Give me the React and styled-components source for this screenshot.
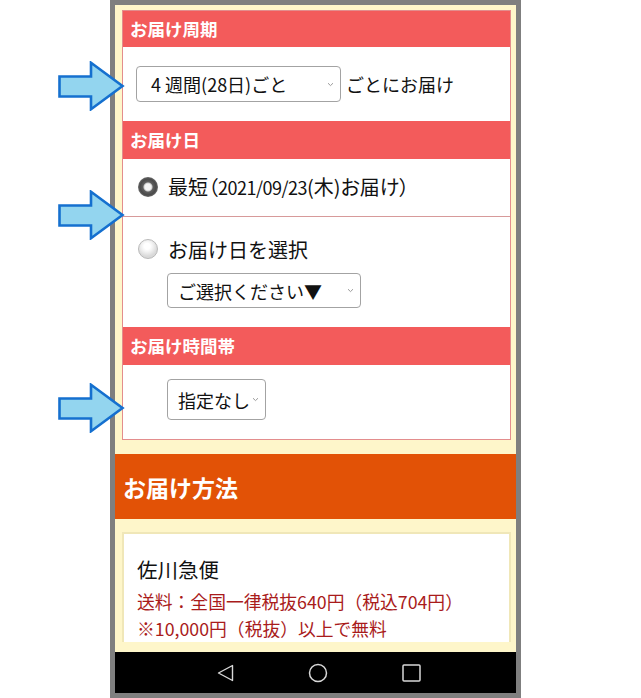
import React from 'react';
import styled, { createGlobalStyle } from 'styled-components';

const GlobalStyle = createGlobalStyle`
  html, body {
    margin: 0;
    padding: 0;
    background: #ffffff;
  }
  body {
    font-family: "Noto Sans CJK JP", "Noto Sans", sans-serif;
  }
`;

const Stage = styled.div`
  position: relative;
  width: 641px;
  height: 698px;
  overflow: hidden;
`;

const Phone = styled.div`
  margin-left: 110px;
  width: 411px;
  height: 698px;
  box-sizing: border-box;
  border: 5px solid #7f7f7f;
  display: flex;
  flex-direction: column;
  background: #000;
`;

const Screen = styled.div`
  flex: 1;
  overflow: hidden;
  background: #fef6ca;
  padding-top: 5px;
  display: flex;
  flex-direction: column;
`;

const Inset = styled.div`
  padding: 0 5px 0 7px;
`;

const FormBox = styled.div`
  border: 1px solid #e38d8d;
  background: #ffffff;
`;

const RedHeader = styled.div`
  background: #f35b5b;
  color: #ffffff;
  font-weight: 700;
  font-size: 17.5px;
  height: ${p => p.$h}px;
  line-height: ${p => p.$h}px;
  padding-left: 7px;
`;

const Body = styled.div`
  box-sizing: border-box;
  height: ${p => p.$h}px;
  padding: ${p => p.$pad};
  display: flex;
  flex-direction: column;
  justify-content: ${p => (p.$center ? 'center' : 'flex-start')};
  gap: ${p => p.$gap || 0}px;
  border-bottom: ${p => (p.$line ? '1px solid #d79a9a' : 'none')};
`;

const Row = styled.div`
  display: flex;
  align-items: center;
  gap: ${p => p.$gap || 0}px;
  padding-left: ${p => p.$indent || 0}px;
  height: ${p => (p.$h ? `${p.$h}px` : 'auto')};
`;

const SelectBox = styled.div`
  box-sizing: border-box;
  width: ${p => p.$w}px;
  height: ${p => p.$h}px;
  border: 1px solid #a3a3a3;
  border-radius: 4px;
  display: flex;
  align-items: center;
  justify-content: space-between;
  padding: 0 6px 0 10px;
  font-size: 18px;
  color: #111;
  background: #fff;
`;

const Label = styled.span`
  font-size: ${p => p.$size || 18}px;
  color: #111;
  white-space: nowrap;
  font-feature-settings: ${p => (p.$tight ? '"palt"' : 'normal')};
`;

const Digits = styled.span`
  font-size: 18px;
  letter-spacing: -0.5px;
`;

const Radio = styled.span`
  box-sizing: border-box;
  width: 20px;
  height: 20px;
  border-radius: 50%;
  flex: none;
  ${p =>
    p.$checked
      ? `background: radial-gradient(circle at 50% 50%, #f4f4f4 0 3px, #cfcfcf 4px, #5f5f5f 5px, #4a4a4a 8px, #6a6a6a 10px);`
      : `background: radial-gradient(circle at 45% 35%, #ffffff 0 3px, #f0f0f0 6px, #d9d9d9 10px);
         border: 1px solid #b9b9b9;`}
`;

const MethodHeader = styled.div`
  margin-top: 14px;
  background: #e25206;
  color: #fff;
  font-weight: 700;
  font-size: 23px;
  height: 65px;
  display: flex;
  align-items: center;
  padding-left: 8px;
`;

const Card = styled.div`
  margin-top: 13px;
  border: 2px solid #f0e7b8;
  border-bottom: none;
  background: #fff;
  padding: 20px 0 0 13px;
  display: flex;
  flex-direction: column;
`;

const Carrier = styled.div`
  font-size: 20.5px;
  color: #111;
  line-height: 30px;
  margin-bottom: 4px;
`;

const Note = styled.div`
  font-size: 17.8px;
  color: #a91b1b;
  line-height: 27px;
  white-space: nowrap;
`;

const NavBar = styled.div`
  height: 41px;
  background: #000;
  display: flex;
  align-items: center;
  padding-left: 102px;
  gap: 74px;
  flex: none;
`;

const ArrowMark = styled.svg`
  position: absolute;
  left: 58px;
  top: ${p => p.$top}px;
  width: 67px;
  height: 50px;
  z-index: 2;
`;

const Chevron = () => (
  <svg width="7" height="5" viewBox="0 0 7 5">
    <path d="M1 1.2 L3.5 3.6 L6 1.2" fill="none" stroke="#9a9a9a" strokeWidth="1" />
  </svg>
);

const Arrow = ({ top }) => (
  <ArrowMark $top={top} viewBox="0 0 67 50">
    <polygon
      points="1.5,15.5 33,15.5 33,1.8 64.5,25 33,48.2 33,35.5 1.5,35.5"
      fill="#93d5ef"
      stroke="#1570cf"
      strokeWidth="2.6"
      strokeLinejoin="miter"
    />
  </ArrowMark>
);

export default function App() {
  return (
    <>
      <GlobalStyle />
      <Stage>
        <Phone>
          <Screen>
            <Inset>
              <FormBox>
                <RedHeader $h={36}>お届け周期</RedHeader>
                <Body $h={74} $pad="0 0 0 13px" $center>
                  <Row $gap={5}>
                    <SelectBox $w={205} $h={36}>
                      <span>&nbsp;4 週間(28日)ごと</span>
                      <Chevron />
                    </SelectBox>
                    <Label>ごとにお届け</Label>
                  </Row>
                </Body>
                <RedHeader $h={38}>お届け日</RedHeader>
                <Body $h={58} $pad="0 0 2px 15px" $center $line>
                  <Row $gap={10}>
                    <Radio $checked />
                    <Label $size={20} $tight>
                      最短（<Digits>2021/09/23</Digits>(木)お届け）
                    </Label>
                  </Row>
                </Body>
                <Body $h={110} $pad="18px 0 0 15px" $gap={10}>
                  <Row $gap={10} $h={28}>
                    <Radio />
                    <Label $size={20}>お届け日を選択</Label>
                  </Row>
                  <Row $indent={29}>
                    <SelectBox $w={194} $h={35}>
                      <span>ご選択ください▼</span>
                      <Chevron />
                    </SelectBox>
                  </Row>
                </Body>
                <RedHeader $h={38}>お届け時間帯</RedHeader>
                <Body $h={74} $pad="14px 0 0 44px">
                  <Row>
                    <SelectBox $w={99} $h={41}>
                      <span>指定なし</span>
                      <Chevron />
                    </SelectBox>
                  </Row>
                </Body>
              </FormBox>
            </Inset>
            <MethodHeader>お届け方法</MethodHeader>
            <Inset>
              <Card>
                <Carrier>佐川急便</Carrier>
                <Note>送料：全国一律税抜640円（税込704円）</Note>
                <Note>※10,000円（税抜）以上で無料</Note>
              </Card>
            </Inset>
          </Screen>
          <NavBar>
            <svg width="17" height="18" viewBox="0 0 17 18">
              <path d="M15.5 1.5 L15.5 16.5 L1.5 9 Z" fill="none" stroke="#d8d8d8" strokeWidth="1.4" strokeLinejoin="round" />
            </svg>
            <svg width="20" height="20" viewBox="0 0 20 20">
              <circle cx="10" cy="10" r="8.5" fill="none" stroke="#d8d8d8" strokeWidth="1.5" />
            </svg>
            <svg width="19" height="18" viewBox="0 0 19 18">
              <rect x="1" y="1" width="17" height="16" rx="1" fill="none" stroke="#d8d8d8" strokeWidth="1.5" />
            </svg>
          </NavBar>
        </Phone>
        <Arrow top={61} />
        <Arrow top={190} />
        <Arrow top={383} />
      </Stage>
    </>
  );
}
